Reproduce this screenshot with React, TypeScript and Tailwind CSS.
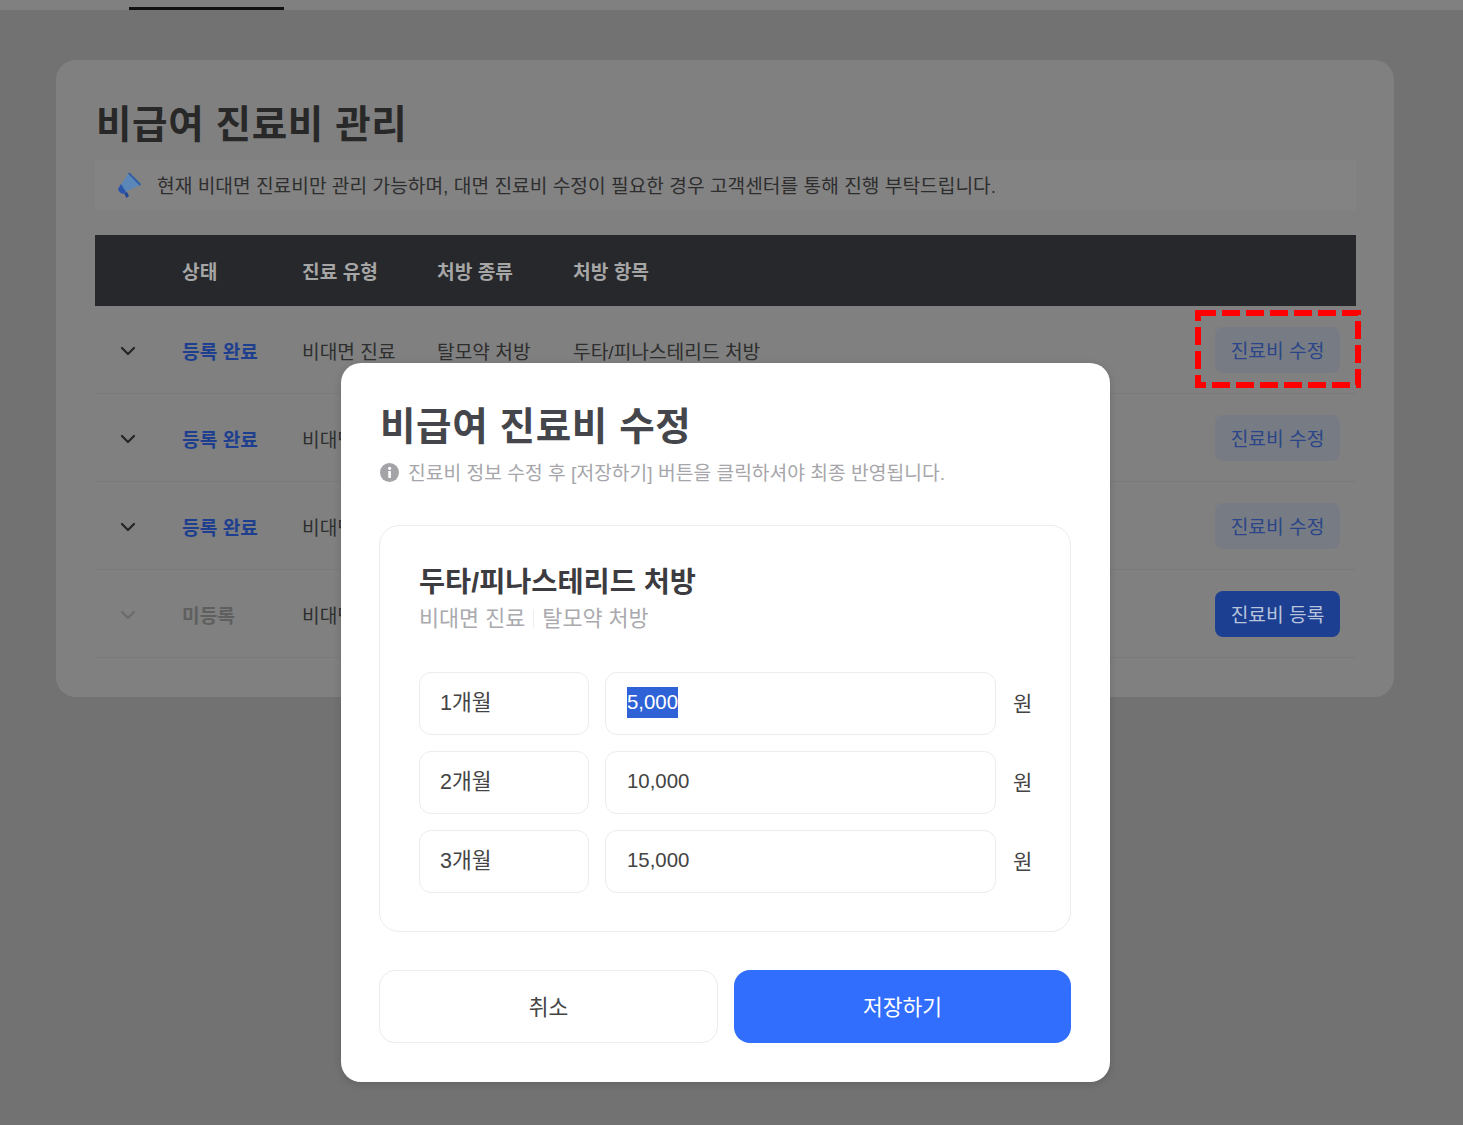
import { ChevronDown } from "lucide-react";

const font = "font-['Liberation_Sans','Noto_Sans_CJK_KR',sans-serif]";

const rows = [
  { status: "등록 완료", done: true },
  { status: "등록 완료", done: true },
  { status: "등록 완료", done: true },
  { status: "미등록", done: false },
];

function Megaphone() {
  return (
    <svg width="24" height="26" viewBox="0 0 24 26" className="shrink-0">
      <path d="M11 2 L23 13 L8 20 L4 13 Z" fill="#5a86b8" />
      <path d="M10.5 1 L13 1 L24 12 L23 14 Z" fill="#2f5fa8" />
      <path d="M4 12 L9 20 L6 22 Q2 21 1 17 Z" fill="#2b55ab" />
      <path d="M7 21 L10 20 L12 24 L9.5 26 Z" fill="#23469a" />
    </svg>
  );
}

function InfoIcon() {
  return (
    <svg width="19" height="19" viewBox="0 0 19 19" className="shrink-0">
      <circle cx="9.5" cy="9.5" r="9.5" fill="#a3a3a8" />
      <rect x="8.3" y="8" width="2.6" height="7" rx="0.6" fill="#fff" />
      <circle cx="9.6" cy="5.3" r="1.6" fill="#fff" />
    </svg>
  );
}

function Row({ status, done, first, last }: { status: string; done: boolean; first: boolean; last: boolean }) {
  return (
    <div className="grid h-[88px] grid-cols-[87px_120px_135px_136px_1fr_auto] items-center border-b border-[#7a7a7a] pr-4 text-[19.2px] text-[#2e2e2e]">
      <div className="flex pl-[21px] pt-[3px]">
        <ChevronDown size={24} strokeWidth={2.2} className={done ? "text-[#222427]" : "text-[#6b6b6b]"} />
      </div>
      <div className={done ? "pt-[7px] font-bold text-[#1e3f8f]" : "pt-[7px] font-bold text-[#5f5f5f]"}>{status}</div>
      <div className="pt-[7px]">비대면 진료</div>
      <div className="pt-[7px]">탈모약 처방</div>
      <div className="pt-[7px]">두타/피나스테리드 처방</div>
      <div className="relative pt-[1px]">
        <div
          className={
            last
              ? "flex h-[46px] w-[125px] items-center justify-center rounded-lg bg-[#1c3f92] pt-[5px] text-[#b9c4dd]"
              : "flex h-[46px] w-[125px] items-center justify-center rounded-lg bg-[#777b84] pt-[5px] text-[#2b4589]"
          }
        >
          {last ? "진료비 등록" : "진료비 수정"}
        </div>
        {first && (
          <svg width="166" height="78" viewBox="0 0 166 78" className="absolute -left-5 -top-[16px]">
            <rect x="3" y="3" width="160" height="72" fill="none" stroke="#ff0000" strokeWidth="6" strokeDasharray="18 6" />
          </svg>
        )}
      </div>
    </div>
  );
}

function PriceRow({ label, value, selected }: { label: string; value: string; selected?: boolean }) {
  return (
    <div className="flex h-[63px] items-center gap-4">
      <div className="flex h-full w-[170px] items-center rounded-xl border border-[#ececee] pl-[20px] text-[21.5px] text-[#444]">
        {label}
      </div>
      <div className="flex h-full w-[391px] items-center rounded-xl border border-[#ececee] pb-[2px] pl-[21px] text-[20.4px] text-[#444]">
        {selected ? <span className="bg-[#2f62d6] text-white">{value}</span> : value}
      </div>
      <div className="ml-px text-[21px] text-[#444]">원</div>
    </div>
  );
}

export default function App() {
  return (
    <div className={`${font} relative h-[1125px] w-[1463px] overflow-hidden bg-[#727272]`}>
      <div className="h-[10px] bg-[#808080]">
        <div className="ml-[129px] w-[155px] pt-[7px]">
          <div className="h-[3px] bg-[#111]" />
        </div>
      </div>

      <div className="ml-14 mt-[50px] h-[637px] w-[1338px] rounded-[20px] bg-[#808080] pl-[39px] pr-[38px] pt-[40px]">
        <h1 className="ml-px text-[38.6px] font-bold leading-[50px] tracking-[0.6px] text-[#282828]">
          비급여 진료비 관리
        </h1>
        <div className="mt-[10px] flex h-[50px] items-center gap-[16px] bg-[#838383] pl-[22px] text-[19.2px] text-[#2e2e2e]">
          <Megaphone />
          <span className="pt-[4px]">현재 비대면 진료비만 관리 가능하며, 대면 진료비 수정이 필요한 경우 고객센터를 통해 진행 부탁드립니다.</span>
        </div>
        <div className="mt-[25px] grid h-[71px] grid-cols-[87px_120px_135px_136px_1fr] items-center bg-[#26282c] pt-[6px] text-[19.2px] font-bold text-[#a6a6a6]">
          <div />
          <div>상태</div>
          <div>진료 유형</div>
          <div>처방 종류</div>
          <div>처방 항목</div>
        </div>
        {rows.map((r, i) => (
          <Row key={i} status={r.status} done={r.done} first={i === 0} last={i === 3} />
        ))}
      </div>

      <div className="absolute left-[341px] top-[363px] h-[719px] w-[769px] rounded-[20px] bg-white pl-[38px] pr-[39px] pt-[39px] shadow-[0_2px_8px_rgba(0,0,0,0.15)]">
        <h2 className="ml-px text-[38.6px] font-bold leading-[50px] tracking-[0.6px] text-[#45464b]">비급여 진료비 수정</h2>
        <div className="ml-px mt-[7px] flex h-[26px] items-center gap-[9px] text-[19.25px] text-[#a6a6aa]">
          <InfoIcon />
          <span className="pt-[4px]">진료비 정보 수정 후 [저장하기] 버튼을 클릭하셔야 최종 반영됩니다.</span>
        </div>
        <div className="mt-[40px] h-[407px] w-[692px] rounded-[20px] border border-[#ececee] pl-[39px] pt-[39px]">
          <div className="text-[28.4px] font-semibold leading-[34px] text-[#3c3c40]">두타/피나스테리드 처방</div>
          <div className="mt-[2px] flex items-center text-[21.8px] leading-[36px] text-[#aaaaae]">
            <span>비대면 진료</span>
            <span className="mx-2 h-[18px] w-px bg-[#eeeeee]" />
            <span>탈모약 처방</span>
          </div>
          <div className="mt-[35px] flex flex-col gap-4">
            <PriceRow label="1개월" value="5,000" selected />
            <PriceRow label="2개월" value="10,000" />
            <PriceRow label="3개월" value="15,000" />
          </div>
        </div>
        <div className="mt-[38px] flex h-[73px] w-[692px] gap-4 text-[21.5px]">
          <div className="flex w-[339px] items-center justify-center rounded-2xl border border-[#ececee] pt-[3px] text-[#444]">취소</div>
          <div className="flex flex-1 items-center justify-center rounded-2xl bg-[#316efd] pt-[3px] text-white">저장하기</div>
        </div>
      </div>
    </div>
  );
}
